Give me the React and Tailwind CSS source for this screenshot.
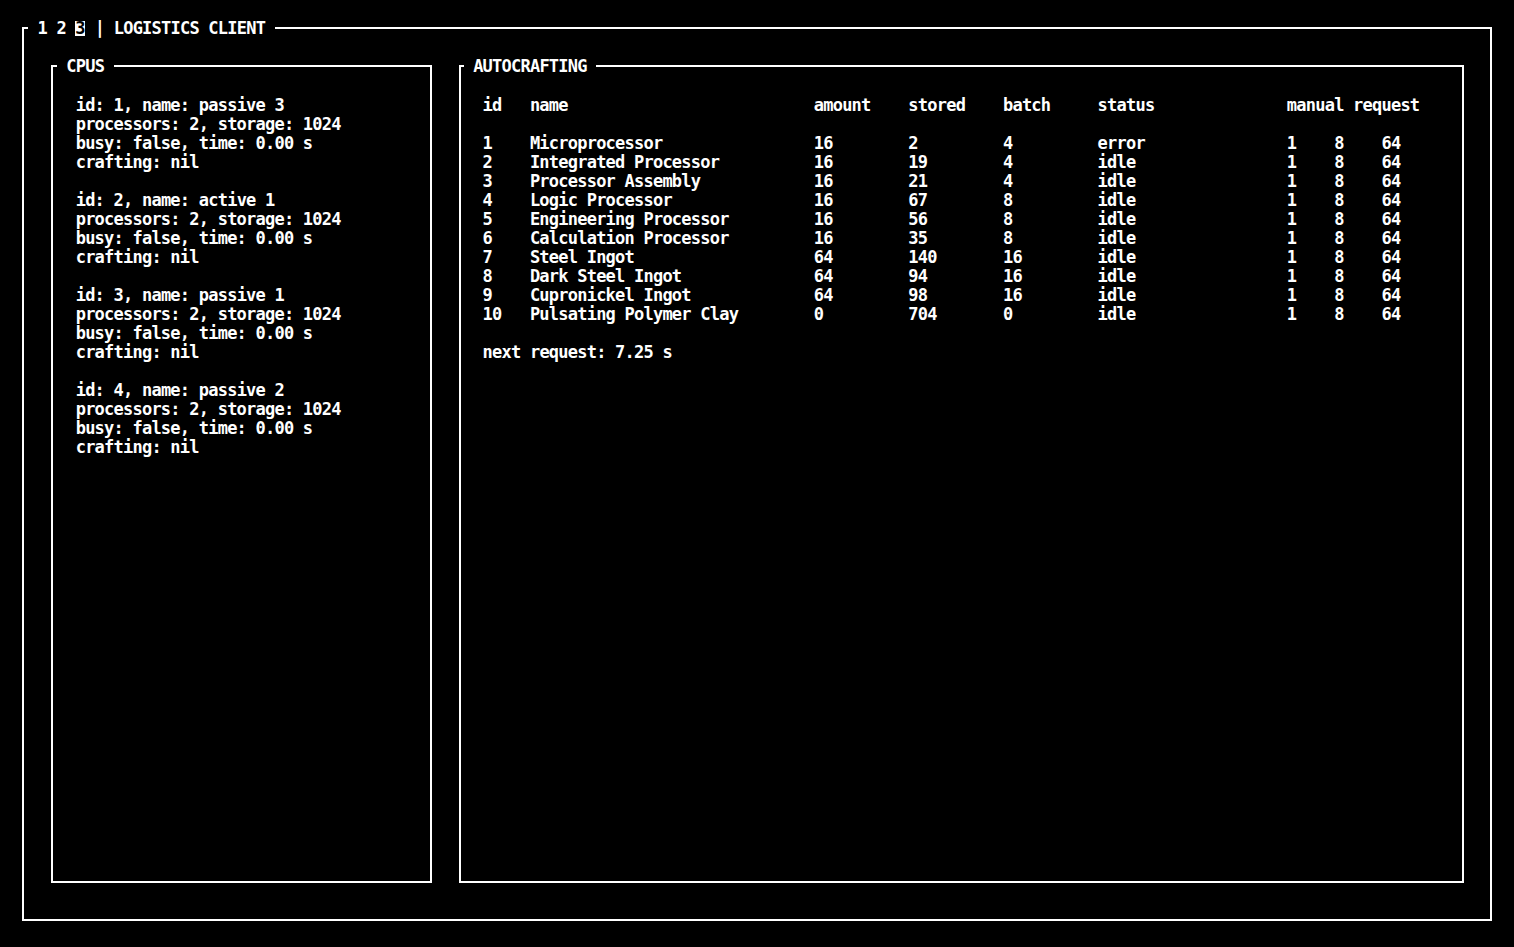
import React from "react";

const cpus = [
  { id: 1, name: "passive 3" },
  { id: 2, name: "active 1" },
  { id: 3, name: "passive 1" },
  { id: 4, name: "passive 2" },
];

const items = [
  [1, "Microprocessor", 16, 2, 4, "error"],
  [2, "Integrated Processor", 16, 19, 4, "idle"],
  [3, "Processor Assembly", 16, 21, 4, "idle"],
  [4, "Logic Processor", 16, 67, 8, "idle"],
  [5, "Engineering Processor", 16, 56, 8, "idle"],
  [6, "Calculation Processor", 16, 35, 8, "idle"],
  [7, "Steel Ingot", 64, 140, 16, "idle"],
  [8, "Dark Steel Ingot", 64, 94, 16, "idle"],
  [9, "Cupronickel Ingot", 64, 98, 16, "idle"],
  [10, "Pulsating Polymer Clay", 0, 704, 0, "idle"],
];

// one terminal line
const Line = ({ children }) => <div className="h-[19px] whitespace-pre">{children}</div>;

const Row = ({ cells }) => (
  <div className="flex h-[19px] whitespace-pre">
    <span className="w-[47.31px]">{cells[0]}</span>
    <span className="w-[283.87px]">{cells[1]}</span>
    <span className="w-[94.62px]">{cells[2]}</span>
    <span className="w-[94.62px]">{cells[3]}</span>
    <span className="w-[94.62px]">{cells[4]}</span>
    <span className="w-[189.25px]">{cells[5]}</span>
    <span className="w-[47.31px]">{cells[6]}</span>
    <span className="w-[47.31px]">{cells[7]}</span>
    <span>{cells[8]}</span>
  </div>
);

const App = () => {
  return (
    <div className="w-[1514px] h-[947px] bg-black text-white font-['DejaVu_Sans_Mono',monospace] font-bold text-[17px] tracking-[-0.77px] leading-[19px] pt-[27px] pl-[22px] overflow-hidden">
      {/* fenetre principale */}
      <div className="relative w-[1470px] h-[894px] border-2 border-white flex gap-[27px] pt-[36px] pl-[27px]">
        <div className="absolute left-[4px] top-[-10px] h-[19px] bg-black px-[9.46px] whitespace-pre flex">
          <span>1 2 </span>
          <span className="mt-[2px] w-[10px] h-[15px] leading-[15px] bg-white text-black">3</span>
          <span> | LOGISTICS CLIENT</span>
        </div>

        {/* CPUS */}
        <div className="relative w-[381px] h-[818px] border-2 border-white pt-[28.5px] pl-[22.7px]">
          <div className="absolute left-[3.8px] top-[-10.2px] h-[19px] bg-black px-[9.46px]">CPUS</div>
          {cpus.map((c) => (
            <div key={c.id} className="mb-[19px]">
              <Line>id: {c.id}, name: {c.name}</Line>
              <Line>processors: 2, storage: 1024</Line>
              <Line>busy: false, time: 0.00 s</Line>
              <Line>crafting: nil</Line>
            </div>
          ))}
        </div>

        {/* AUTOCRAFTING */}
        <div className="relative w-[1005px] h-[818px] border-2 border-white pt-[28.5px] pl-[21.6px]">
          <div className="absolute left-[2.7px] top-[-10.2px] h-[19px] bg-black px-[9.46px]">AUTOCRAFTING</div>
          <div className="flex h-[19px] whitespace-pre">
            <span className="w-[47.31px]">id</span>
            <span className="w-[283.87px]">name</span>
            <span className="w-[94.62px]">amount</span>
            <span className="w-[94.62px]">stored</span>
            <span className="w-[94.62px]">batch</span>
            <span className="w-[189.25px]">status</span>
            <span>manual request</span>
          </div>
          <Line> </Line>
          {items.map((it) => (
            <Row key={it[0]} cells={[...it, 1, 8, 64]} />
          ))}
          <Line> </Line>
          <Line>next request: 7.25 s</Line>
        </div>
      </div>
    </div>
  );
};

export default App;
